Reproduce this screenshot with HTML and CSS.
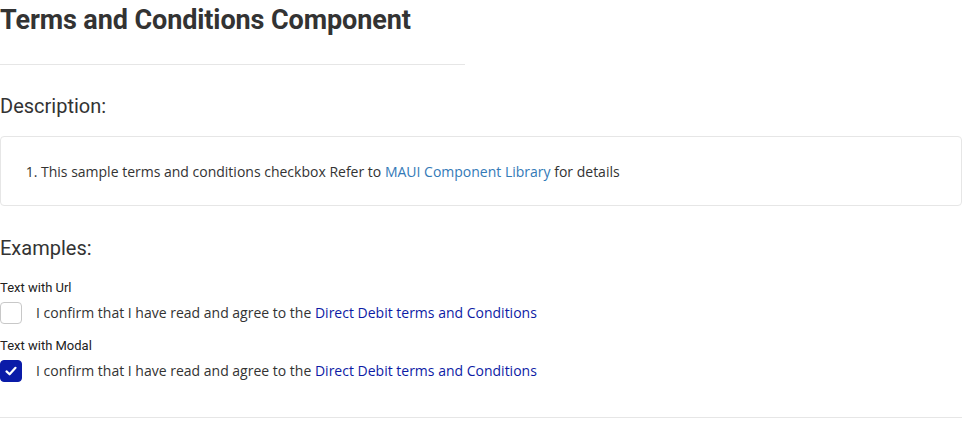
FILE: index.html
```html
<!DOCTYPE html>
<html>
<head>
<meta charset="utf-8">
<link rel="stylesheet" href="styles.css">
</head>
<body>
<div class="page">
  <h1 class="title">Terms and Conditions Component</h1>
  <hr class="rule-short">
  <h2 class="section-title">Description:</h2>
  <div class="desc-box">
    <ol class="desc-list">
      <li>This sample terms and conditions checkbox Refer to <a class="lib-link" href="#">MAUI Component Library</a> for details</li>
    </ol>
  </div>
  <h2 class="section-title examples">Examples:</h2>
  <div class="example">
    <div class="example-label">Text with Url</div>
    <label class="check-row">
      <span class="checkbox"></span>
      <span class="check-text">I confirm that I have read and agree to the <a class="terms-link" href="#">Direct Debit terms and Conditions</a></span>
    </label>
  </div>
  <div class="example">
    <div class="example-label">Text with Modal</div>
    <label class="check-row">
      <span class="checkbox checked"><svg width="14" height="14" viewBox="0 0 14 14"><path d="M2.5 7.4 L5.6 10.3 L11.5 3.8" fill="none" stroke="#fff" stroke-width="2.2" stroke-linecap="round" stroke-linejoin="round"/></svg></span>
      <span class="check-text">I confirm that I have read and agree to the <a class="terms-link" href="#">Direct Debit terms and Conditions</a></span>
    </label>
  </div>
  <hr class="rule-full">
</div>
</body>
</html>
```

FILE: styles.css
```css
html, body {
  margin: 0;
  padding: 0;
  background: #fff;
}
body {
  font-family: "Open Sans", "Liberation Sans", sans-serif;
  color: #333;
}
.page {
  width: 962px;
}
.title {
  font-family: "Roboto", "Liberation Sans", sans-serif;
  font-weight: 700;
  font-size: 27px;
  line-height: 40px;
  margin: 0;
  padding-top: 0;
  color: #333;
  letter-spacing: -0.1px;
}
.rule-short {
  width: 465px;
  margin: 24px 0 0 0;
  border: 0;
  border-top: 1px solid #e6e6e6;
  height: 0;
}
.section-title {
  font-family: "Roboto", "Liberation Sans", sans-serif;
  font-weight: 400;
  font-size: 20px;
  line-height: 28px;
  margin: 27px 0 0 0;
  color: #333;
}
.desc-box {
  margin-top: 16px;
  height: 68px;
  border: 1px solid #e6e6e6;
  border-radius: 4px;
  display: flex;
  align-items: center;
}
.desc-list {
  margin: 0;
  padding: 2px 0 0 40px;
  font-size: 14px;
  line-height: 20px;
}
.lib-link {
  color: #337ab7;
  text-decoration: none;
}
.examples {
  margin-top: 28px;
}
.example {
  margin-top: 18px;
}
.example + .example {
  margin-top: 14px;
}
.example-label {
  font-family: "Roboto", "Liberation Sans", sans-serif;
  font-size: 13px;
  line-height: 16px;
  color: #222;
}
.check-row {
  display: flex;
  align-items: center;
  margin-top: 6px;
}
.checkbox {
  box-sizing: border-box;
  width: 22px;
  height: 22px;
  border: 1px solid #c8c8c8;
  border-radius: 4px;
  display: flex;
  align-items: center;
  justify-content: center;
  flex: none;
}
.checkbox.checked {
  background: #0a1ba8;
  border-color: #0a1ba8;
}
.check-text {
  margin-left: 14px;
  font-size: 14px;
  line-height: 20px;
  color: #333;
}
.terms-link {
  color: #0d1ba5;
  text-decoration: none;
}
.rule-full {
  margin: 35px 0 0 0;
  border: 0;
  border-top: 1px solid #e6e6e6;
  height: 0;
}
```
